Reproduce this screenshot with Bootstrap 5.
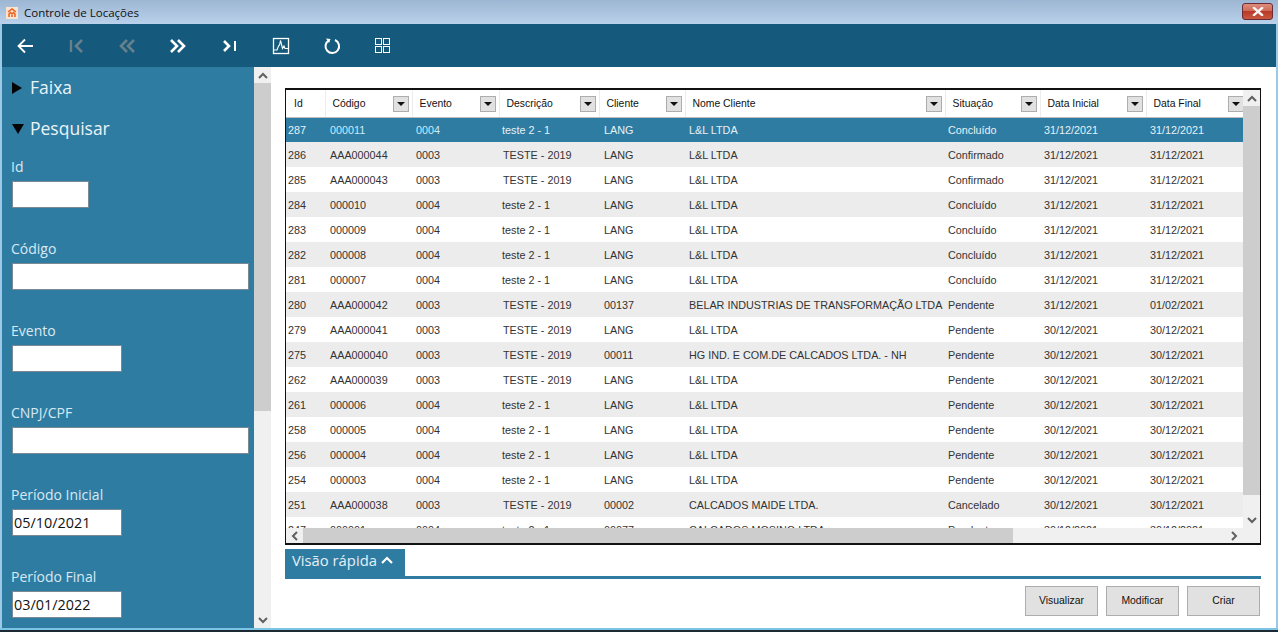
<!DOCTYPE html>
<html lang="pt">
<head>
<meta charset="utf-8">
<title>Controle de Locações</title>
<link href="https://cdn.jsdelivr.net/npm/bootstrap@5.3.0/dist/css/bootstrap.min.css" rel="stylesheet">
<style>
html,body{height:632px;overflow:hidden;}
body{width:1278px;background:#9cc9e6;font-family:"Liberation Sans",Arial,sans-serif;font-size:11px;color:#333;}
.win{width:1278px;height:632px;padding:0 2px 0 2px;}
.titlebar{height:24px;margin-left:-2px;margin-right:-2px;background:linear-gradient(#9db6d3,#b9d1ea);font-family:"Open Sans",sans-serif;font-size:11.5px;color:#111;padding-left:6px;flex:none;}
.titletext{padding-top:2px;}
.applogo{width:12px;height:12px;margin:2px 6px 0 0;}
.closebtn{width:31px;height:17px;margin:3px 5px 0 0;border:1px solid #6b2a36;border-radius:3px;background:linear-gradient(#dc8e7e 0,#cf6a58 45%,#b93a28 50%,#c9583f 100%);}
.toolbar{height:43px;background:#155a7c;flex:none;}
.tbslot{width:51px;height:43px;flex:none;}
.tbslot svg{width:20px;height:20px;}
.mainzone{height:561px;}
.sidepane{width:252px;background:#2f7ca3;color:#e4f0f6;font-family:"Open Sans",sans-serif;overflow:hidden;flex:none;}
.groupline{height:41px;padding-left:10px;font-size:17.5px;color:#eaf3f7;gap:8px;}
.fieldzone{padding-top:8px;}
.fieldblock{height:82px;padding-left:10px;}
.fieldlabel{font-size:14px;line-height:20px;margin:0 0 4px -1px;height:20px;color:#d8e9f2;}
.sidepane .form-control{height:27px;border:1px solid #7a8a94;border-radius:0;padding:0 1px;font-size:14.4px;font-family:"Open Sans",sans-serif;color:#111;background:#fff;min-height:0;}
.w-short{width:77px;}
.w-mid{width:110px;}
.w-long{width:237px;}
.vbar{width:17px;background:#f0f0f0;flex:none;}
.sthumb{background:#cdcdcd;}
.sarrow{height:16px;flex:none;}
.sarrow svg{width:10px;height:7px;}
.sidebar-thumb{height:328px;}
.contentzone{background:#fff;padding:21px 0 0 14px;min-width:0;}
.gridbox{height:457px;width:976px;border:1px solid #111;border-width:2px 1px;background:#fff;position:relative;overflow:hidden;}
.gridinner{width:957px;height:438px;overflow:hidden;}
.dtable{table-layout:fixed;width:957px;margin:0;border-collapse:collapse;font-size:10.8px;line-height:15px;--bs-table-bg:transparent;}
.dtable th{height:27px;padding:1px 0 0 7px;font-weight:400;font-size:10.4px;color:#111;border-bottom:1px solid #bdbdbd;border-right:1px solid #ececec;vertical-align:middle;white-space:nowrap;overflow:hidden;background:#fff;box-shadow:none;}
.dtable th:first-child{padding-left:8px;}
.dtable th:last-child{border-right:0;}
.dtable th:last-child .thflex{padding-right:0;margin-right:-1px;}
.dtable td{height:25px;padding:2px 0 0 4px;border:0;vertical-align:middle;white-space:nowrap;overflow:hidden;color:#333;background:transparent;box-shadow:none;}
.dtable td:nth-child(1){padding-left:2px;}
.dtable td:nth-child(2),.dtable td:nth-child(5){padding-left:5px;}
.dtable td:nth-child(4),.dtable td:nth-child(7){padding-left:3px;}
.dtable td.descupper{padding-left:4px;}
.dtable tbody tr:nth-child(even) td{background:#ececec;}
.dtable tbody tr.selrow td{background:#2f7ca3;color:#e6f1f6;}
.dtable tr.selrow td.lightcell{color:#cdeaf8;}
.thflex{display:flex;align-items:center;justify-content:space-between;padding-right:3px;}
.thdrop{width:16px;height:16px;border:1px solid #adadad;background:#e1e1e1;display:flex;align-items:center;justify-content:center;flex:none;}
.thdrop i{display:block;width:0;height:0;border-left:4px solid transparent;border-right:4px solid transparent;border-top:4px solid #111;}
.vgrid{position:absolute;right:0;top:0;bottom:15px;width:17px;background:#f0f0f0;}
.hgrid{height:15px;width:957px;background:#f0f0f0;}
.hthumb{width:710px;height:15px;background:#cdcdcd;}
.harrow{width:17px;height:15px;flex:none;}
.harrow svg{width:7px;height:10px;}
.corner{position:absolute;right:0;bottom:0;width:17px;height:15px;background:#f0f0f0;}
.gridthumb{height:389px;}
.gridspace{flex:1;}
.tabstrip{margin-top:4px;height:30px;width:976px;border-bottom:3px solid #2f7ca3;}
.tabhead{width:120px;height:27px;background:#2f7ca3;color:#e4f0f6;font-family:"Open Sans",sans-serif;font-size:14.8px;padding:0 0 5px 7px;gap:4px;}
.tabhead svg{width:12px;height:8px;}
.actionrow{gap:8px;width:975px;margin-top:7px;}
.actbtn{width:73px;height:30px;border:1px solid #adadad;border-radius:0;background:#e1e1e1;color:#111;font-size:10.4px;font-family:"Liberation Sans",sans-serif;padding:0;}
.bottomedge{height:2px;margin:0 -2px;background:#7cc4e6;flex:none;}
.bottomdark{height:2px;margin:0 -2px;background:#1c2a33;flex:none;}
</style>
</head>
<body>
<div class="win d-flex flex-column">
  <div class="titlebar d-flex align-items-center">
    <svg class="applogo" viewBox="0 0 12 12"><rect width="12" height="12" fill="#fbe3d2"/><path d="M2 5 6 2l4 3M3 10V7l1.500-1.500L6 7l1.500-1.500L9 7v3M6 8v2" fill="none" stroke="#e9601c" stroke-width="1.500"/></svg>
    <span class="flex-grow-1 titletext">Controle de Locações</span>
    <div class="closebtn d-flex align-items-center justify-content-center align-self-start">
      <svg width="12" height="9" viewBox="0 0 12 9"><path d="M2 1l8 7M10 1 2 8" stroke="#f4f4f4" stroke-width="2.400" stroke-linecap="square" fill="none"/></svg>
    </div>
  </div>
  <div class="toolbar d-flex align-items-center ps-0">
    <div class="tbslot d-flex align-items-center justify-content-center" style="margin-left:-2px"><svg viewBox="0 0 20 20"><path d="M17 10H2.500M9 3.500 2.500 10 9 16.500" fill="none" stroke="#fff" stroke-width="1.800"/></svg></div>
    <div class="tbslot d-flex align-items-center justify-content-center"><svg viewBox="0 0 20 20"><path d="M4 4v12" stroke="#687f8c" stroke-width="2.400"/><path d="M15 4 9 10l6 6" fill="none" stroke="#687f8c" stroke-width="2.600"/></svg></div>
    <div class="tbslot d-flex align-items-center justify-content-center"><svg viewBox="0 0 20 20"><path d="M9 4 3 10l6 6M16 4l-6 6 6 6" fill="none" stroke="#687f8c" stroke-width="2.600"/></svg></div>
    <div class="tbslot d-flex align-items-center justify-content-center"><svg viewBox="0 0 20 20"><path d="M2 4l6 6-6 6M9 4l6 6-6 6" fill="none" stroke="#fff" stroke-width="2.600"/></svg></div>
    <div class="tbslot d-flex align-items-center justify-content-center"><svg viewBox="0 0 20 20"><path d="M4 5l5 5-5 5" fill="none" stroke="#fff" stroke-width="2.600"/><path d="M15 5v10" stroke="#fff" stroke-width="2"/></svg></div>
    <div class="tbslot d-flex align-items-center justify-content-center"><svg viewBox="0 0 20 20"><rect x="2.500" y="2.500" width="15" height="15" fill="none" stroke="#fff" stroke-width="1.300"/><path d="M3 14h3l1.500-4 1-1 1-4.500 2 8 1.500-2.500 1 2.500h3" fill="none" stroke="#fff" stroke-width="1.100"/></svg></div>
    <div class="tbslot d-flex align-items-center justify-content-center"><svg viewBox="0 0 20 20"><path d="M7 4.300A6.800 6.800 0 1 0 13 4" fill="none" stroke="#fff" stroke-width="2"/><path d="M4 2.500 8.500 3 7 7z" fill="#fff"/></svg></div>
    <div class="tbslot d-flex align-items-center justify-content-center"><svg viewBox="0 0 20 20" fill="none" stroke="#fff" stroke-width="1" shape-rendering="crispEdges"><rect x="2.500" y="2.500" width="6" height="6"/><rect x="10.500" y="2.500" width="6" height="6"/><rect x="2.500" y="10.500" width="6" height="6"/><rect x="10.500" y="10.500" width="6" height="6"/></svg></div>
  </div>
  <div class="mainzone d-flex flex-grow-0">
    <div class="sidepane">
      <div class="groupline d-flex align-items-center"><svg width="10" height="12" viewBox="0 0 10 12"><path d="M0 0l10 6-10 6z" fill="#050505"/></svg><span>Faixa</span></div>
      <div class="groupline d-flex align-items-center" style="gap:6px"><svg width="12" height="10" viewBox="0 0 12 10"><path d="M0 0h12L6 10z" fill="#050505"/></svg><span>Pesquisar</span></div>
      <div class="fieldzone">
      <div class="fieldblock"><p class="fieldlabel">Id</p><input class="form-control w-short" type="text" aria-label="Id"></div>
      <div class="fieldblock"><p class="fieldlabel">Código</p><input class="form-control w-long" type="text" aria-label="Código"></div>
      <div class="fieldblock"><p class="fieldlabel">Evento</p><input class="form-control w-mid" type="text" aria-label="Evento"></div>
      <div class="fieldblock"><p class="fieldlabel">CNPJ/CPF</p><input class="form-control w-long" type="text" aria-label="CNPJ/CPF"></div>
      <div class="fieldblock"><p class="fieldlabel">Período Inicial</p><input class="form-control w-mid" type="text" value="05/10/2021" aria-label="Período Inicial"></div>
      <div class="fieldblock"><p class="fieldlabel">Período Final</p><input class="form-control w-mid" type="text" value="03/01/2022" aria-label="Período Final"></div>
      </div>
    </div>
    <div class="vbar d-flex flex-column">
      <div class="sarrow d-flex align-items-center justify-content-center"><svg viewBox="0 0 10 7"><path d="M1 6l4-4 4 4" fill="none" stroke="#606060" stroke-width="2"/></svg></div>
      <div class="sthumb sidebar-thumb"></div>
      <div class="gridspace"></div>
      <div class="sarrow d-flex align-items-center justify-content-center"><svg viewBox="0 0 10 7"><path d="M1 1l4 4 4-4" fill="none" stroke="#606060" stroke-width="2"/></svg></div>
    </div>
    <div class="contentzone flex-grow-1">
      <div class="gridbox">
        <div class="gridinner">
          <table class="table dtable">
            <colgroup><col style="width:39px"><col style="width:87px"><col style="width:87px"><col style="width:100px"><col style="width:86px"><col style="width:260px"><col style="width:95px"><col style="width:106px"><col style="width:97px"></colgroup>
            <thead><tr>
              <th>Id</th>
              <th><div class="thflex"><span>Código</span><span class="thdrop"><i></i></span></div></th>
              <th><div class="thflex"><span>Evento</span><span class="thdrop"><i></i></span></div></th>
              <th><div class="thflex"><span>Descrição</span><span class="thdrop"><i></i></span></div></th>
              <th><div class="thflex"><span>Cliente</span><span class="thdrop"><i></i></span></div></th>
              <th><div class="thflex"><span>Nome Cliente</span><span class="thdrop"><i></i></span></div></th>
              <th><div class="thflex"><span>Situação</span><span class="thdrop"><i></i></span></div></th>
              <th><div class="thflex"><span>Data Inicial</span><span class="thdrop"><i></i></span></div></th>
              <th><div class="thflex"><span>Data Final</span><span class="thdrop"><i></i></span></div></th>
            </tr></thead>
            <tbody>
              <tr class="selrow"><td>287</td><td class="lightcell">000011</td><td class="lightcell">0004</td><td>teste 2 - 1</td><td>LANG</td><td>L&amp;L LTDA</td><td>Concluído</td><td>31/12/2021</td><td>31/12/2021</td></tr>
              <tr><td>286</td><td>AAA000044</td><td>0003</td><td class="descupper">TESTE - 2019</td><td>LANG</td><td>L&amp;L LTDA</td><td>Confirmado</td><td>31/12/2021</td><td>31/12/2021</td></tr>
              <tr><td>285</td><td>AAA000043</td><td>0003</td><td class="descupper">TESTE - 2019</td><td>LANG</td><td>L&amp;L LTDA</td><td>Confirmado</td><td>31/12/2021</td><td>31/12/2021</td></tr>
              <tr><td>284</td><td>000010</td><td>0004</td><td>teste 2 - 1</td><td>LANG</td><td>L&amp;L LTDA</td><td>Concluído</td><td>31/12/2021</td><td>31/12/2021</td></tr>
              <tr><td>283</td><td>000009</td><td>0004</td><td>teste 2 - 1</td><td>LANG</td><td>L&amp;L LTDA</td><td>Concluído</td><td>31/12/2021</td><td>31/12/2021</td></tr>
              <tr><td>282</td><td>000008</td><td>0004</td><td>teste 2 - 1</td><td>LANG</td><td>L&amp;L LTDA</td><td>Concluído</td><td>31/12/2021</td><td>31/12/2021</td></tr>
              <tr><td>281</td><td>000007</td><td>0004</td><td>teste 2 - 1</td><td>LANG</td><td>L&amp;L LTDA</td><td>Concluído</td><td>31/12/2021</td><td>31/12/2021</td></tr>
              <tr><td>280</td><td>AAA000042</td><td>0003</td><td class="descupper">TESTE - 2019</td><td>00137</td><td>BELAR INDUSTRIAS DE TRANSFORMAÇÃO LTDA</td><td>Pendente</td><td>31/12/2021</td><td>01/02/2021</td></tr>
              <tr><td>279</td><td>AAA000041</td><td>0003</td><td class="descupper">TESTE - 2019</td><td>LANG</td><td>L&amp;L LTDA</td><td>Pendente</td><td>30/12/2021</td><td>30/12/2021</td></tr>
              <tr><td>275</td><td>AAA000040</td><td>0003</td><td class="descupper">TESTE - 2019</td><td>00011</td><td>HG IND. E COM.DE CALCADOS LTDA. - NH</td><td>Pendente</td><td>30/12/2021</td><td>30/12/2021</td></tr>
              <tr><td>262</td><td>AAA000039</td><td>0003</td><td class="descupper">TESTE - 2019</td><td>LANG</td><td>L&amp;L LTDA</td><td>Pendente</td><td>30/12/2021</td><td>30/12/2021</td></tr>
              <tr><td>261</td><td>000006</td><td>0004</td><td>teste 2 - 1</td><td>LANG</td><td>L&amp;L LTDA</td><td>Pendente</td><td>30/12/2021</td><td>30/12/2021</td></tr>
              <tr><td>258</td><td>000005</td><td>0004</td><td>teste 2 - 1</td><td>LANG</td><td>L&amp;L LTDA</td><td>Pendente</td><td>30/12/2021</td><td>30/12/2021</td></tr>
              <tr><td>256</td><td>000004</td><td>0004</td><td>teste 2 - 1</td><td>LANG</td><td>L&amp;L LTDA</td><td>Pendente</td><td>30/12/2021</td><td>30/12/2021</td></tr>
              <tr><td>254</td><td>000003</td><td>0004</td><td>teste 2 - 1</td><td>LANG</td><td>L&amp;L LTDA</td><td>Pendente</td><td>30/12/2021</td><td>30/12/2021</td></tr>
              <tr><td>251</td><td>AAA000038</td><td>0003</td><td class="descupper">TESTE - 2019</td><td>00002</td><td>CALCADOS MAIDE LTDA.</td><td>Cancelado</td><td>30/12/2021</td><td>30/12/2021</td></tr>
              <tr><td>247</td><td>000001</td><td>0004</td><td>teste 2 - 1</td><td>00077</td><td>CALCADOS MOSINO LTDA.</td><td>Pendente</td><td>30/12/2021</td><td>30/12/2021</td></tr>
            </tbody>
          </table>
        </div>
        <div class="hgrid d-flex">
          <div class="harrow d-flex align-items-center justify-content-center"><svg viewBox="0 0 7 10"><path d="M6 1 2 5l4 4" fill="none" stroke="#606060" stroke-width="2"/></svg></div>
          <div class="hthumb"></div>
          <div class="gridspace"></div>
          <div class="harrow d-flex align-items-center justify-content-center"><svg viewBox="0 0 7 10"><path d="M1 1l4 4-4 4" fill="none" stroke="#606060" stroke-width="2"/></svg></div>
        </div>
        <div class="vgrid d-flex flex-column">
          <div class="sarrow d-flex align-items-center justify-content-center"><svg viewBox="0 0 10 7"><path d="M1 6l4-4 4 4" fill="none" stroke="#606060" stroke-width="2"/></svg></div>
          <div class="sthumb gridthumb"></div>
          <div class="gridspace"></div>
          <div class="sarrow d-flex align-items-center justify-content-center"><svg viewBox="0 0 10 7"><path d="M1 1l4 4 4-4" fill="none" stroke="#606060" stroke-width="2"/></svg></div>
        </div>
        <div class="corner"></div>
      </div>
      <div class="tabstrip">
        <div class="tabhead d-flex align-items-center"><span>Visão rápida</span><svg viewBox="0 0 12 8"><path d="M1 7l5-5 5 5" fill="none" stroke="#fff" stroke-width="2.200"/></svg></div>
      </div>
      <div class="actionrow d-flex justify-content-end">
        <button type="button" class="btn actbtn">Visualizar</button>
        <button type="button" class="btn actbtn">Modificar</button>
        <button type="button" class="btn actbtn">Criar</button>
      </div>
    </div>
  </div>
  <div class="bottomedge"></div>
  <div class="bottomdark"></div>
</div>
</body>
</html>
